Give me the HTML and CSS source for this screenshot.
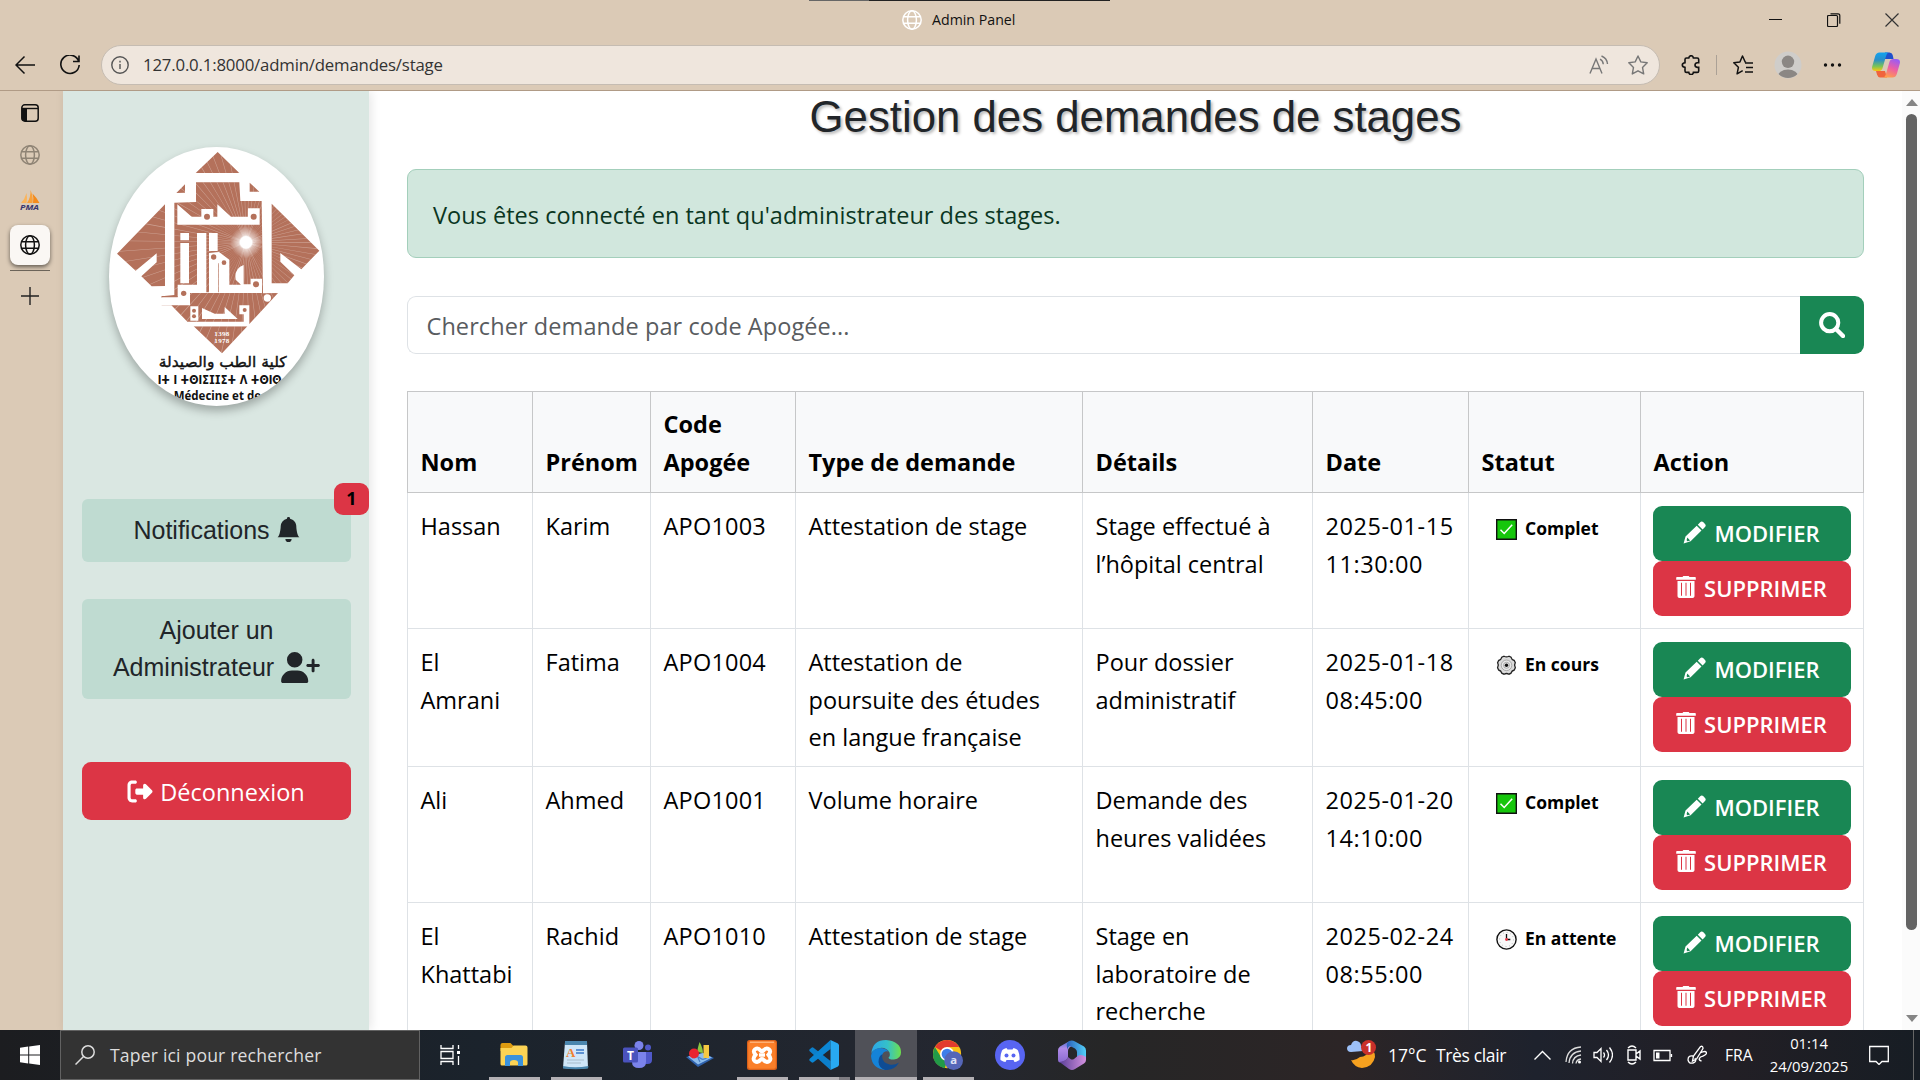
FILE: index.html
```html
<!DOCTYPE html>
<html lang="fr">
<head>
<meta charset="utf-8">
<title>Admin Panel</title>
<link rel="stylesheet" href="styles.css">
</head>
<body>
<svg width="0" height="0" class="defs" aria-hidden="true">
  <defs>
    <symbol id="globe" viewBox="0 0 20 20"><g fill="none" stroke="currentColor" stroke-width="1.5"><circle cx="10" cy="10" r="9.2"/><ellipse cx="10" cy="10" rx="4.4" ry="9.2"/><path d="M1.5 6.7h17M1.5 13.3h17"/></g></symbol>
    <symbol id="pencil" viewBox="0 0 23 23"><path d="M17.2 1.2a2.3 2.3 0 0 1 3.2 0l1.6 1.7a2.3 2.3 0 0 1 0 3.1l-2.4 2.5-4.8-4.8zM13.7 4.8l4.8 4.8L7.6 20.3.6 22.6l1.9-7zM4.300 16.600l-.7 2.700.9.900 2.600-.7z" fill-rule="evenodd" fill="currentColor"/></symbol>
    <symbol id="trash" viewBox="0 0 20 22"><path d="M6.500 1 7.300 0h5.400l.8 1H19a.8.8 0 0 1 .8.8v2H.2v-2A.8.8 0 0 1 1 1zM1.500 5h17v15.200A1.900 1.900 0 0 1 16.600 22H3.400a1.900 1.900 0 0 1-1.900-1.800zm3.500 1.700v13h1v-13zm4.500 0v13h1v-13zm4.500 0v13h1v-13z" fill-rule="evenodd" fill="currentColor"/></symbol>
    <symbol id="done" viewBox="0 0 21 21"><path d="M.7.7h19.600v19.600H.7z" fill="#16c60c" stroke="#111" stroke-width="1.400"/><path d="m4.500 10.800 3.700 3.700 8-8.800" fill="none" stroke="#fff" stroke-width="1.500"/></symbol>
    <symbol id="gear" viewBox="0 0 21 21"><path d="M8 1.200q2.500 1.400 5 0l2 .9q.6 2.700 3.300 3.400l1 2.200q-1.500 2.500 0 5l-1 2.300q-2.700.6-3.300 3.200l-2 1q-2.500-1.400-5 0l-2.200-1q-.6-2.600-3.200-3.200l-1-2.300q1.500-2.500 0-5l1-2.200q2.600-.7 3.200-3.400z" fill="#dcdcdc" stroke="#222" stroke-width="1.300"/><circle cx="10.500" cy="10.300" r="5.300" fill="#e8e8e8" stroke="#999" stroke-width=".8"/><circle cx="10.500" cy="10.300" r="3" fill="none" stroke="#999" stroke-width=".8"/><circle cx="10.500" cy="10.300" r="1.700" fill="#111"/></symbol>
    <symbol id="clock" viewBox="0 0 21 21"><circle cx="10.500" cy="10.500" r="9.600" fill="#f8f8f8" stroke="#111" stroke-width="1.400"/><circle cx="10.500" cy="10.500" r="7" fill="none" stroke="#aaa" stroke-width=".9" stroke-dasharray=".9 2.765"/><path d="M10.500 5v5.500h3.800" fill="none" stroke="#111" stroke-width="1.300"/><circle cx="10.500" cy="10.500" r="1.400" fill="#f03a4a"/></symbol>
  </defs>
</svg>

<header class="browser">
  <div class="titlebar">
    <div class="peek"></div>
    <div class="tab-title"><svg class="i20"><use href="#globe"/></svg><span>Admin Panel</span></div>
    <div class="window-buttons">
      <svg viewBox="0 0 14 14"><path d="M0 6.500h13" stroke="#111"/></svg>
      <svg viewBox="0 0 14 14"><path d="M.5 3.500a1 1 0 0 1 1-1h8a1 1 0 0 1 1 1v9a1 1 0 0 1-1 1h-8a1 1 0 0 1-1-1zM3.500.8H11a1.700 1.700 0 0 1 1.800 1.700v8.200" fill="none" stroke="#111" stroke-width="1.200"/></svg>
      <svg viewBox="0 0 14 14"><path d="m.5.500 13 13m0-13-13 13" stroke="#333" stroke-width="1.200"/></svg>
    </div>
  </div>
  <div class="toolbar">
    <svg class="i20 back" viewBox="0 0 20 20"><path d="M20 10H1M9.500 1.500 1 10l8.500 8.500" fill="none" stroke="#111" stroke-width="1.500"/></svg>
    <svg class="i20 reload" viewBox="0 0 20 20"><path d="M18.700 6.200A9.200 9.200 0 1 0 19.200 10M19 .5v6h-6" fill="none" stroke="#111" stroke-width="1.600"/></svg>
    <div class="address">
      <svg class="info" viewBox="0 0 18 18"><g fill="none" stroke="#555" stroke-width="1.400"><circle cx="9" cy="9" r="8.200"/><path d="M9 8v5M9 4.800v1.600"/></g></svg>
      <span class="url">127.0.0.1:8000/admin/demandes/stage</span>
      <svg class="read" viewBox="0 0 20 20"><g fill="none" stroke="#777" stroke-width="1.400"><path d="M1 18.500 7 4l6 14.500M3.200 13.500h7.700M11 4.200q3 1.500 3.300 5M12.500 1q5.500 2.200 6 8"/></g></svg>
      <svg class="i20" viewBox="0 0 20 20"><path d="m10 1 2.800 5.900 6.400.9-4.700 4.600 1.200 6.500-5.700-3.100-5.700 3.100 1.200-6.500L.8 7.800l6.400-.9z" fill="none" stroke="#777" stroke-width="1.400" stroke-linejoin="round"/></svg>
    </div>
    <div class="tools">
      <svg viewBox="0 0 20 20"><path d="M4 4.500q0-1.500 1.500-1.500h2.300q.3-2.300 2.300-2.300T12.400 3h3.800q1.500 0 1.500 1.500v3.300h-1.400q-2.300.3-2.300 2.300t2.300 2.300h1.400v3.500q0 1.500-1.500 1.500h-3.800q-.3 2.200-2.300 2.200t-2.300-2.200H5.500q-1.500 0-1.500-1.500v-3.500Q1.300 12 1.300 10T4 7.800z" fill="none" stroke="#111" stroke-width="1.600"/></svg>
      <span class="rule"></span>
      <svg viewBox="0 0 20 20"><path d="m13 7.300-.8-.3L9.500 1 6.900 7 .8 7.800l4.600 4.500-1.300 6.500 5.600-3.100M12 8h8M13 12.500h7M12 17h8" fill="none" stroke="#111" stroke-width="1.500" stroke-linejoin="round"/></svg>
      <svg class="avatar" viewBox="0 0 28 28"><defs><clipPath id="av"><circle cx="14" cy="14" r="13"/></clipPath></defs><circle cx="14" cy="14" r="13.500" fill="#cfcdca"/><g clip-path="url(#av)" fill="#8b8784"><circle cx="14" cy="10.800" r="6.200"/><ellipse cx="14" cy="26" rx="10.500" ry="7.500"/></g></svg>
      <svg viewBox="0 0 20 20"><g fill="#111"><circle cx="3.500" cy="10" r="1.700"/><circle cx="10.500" cy="10" r="1.700"/><circle cx="17.500" cy="10" r="1.700"/></g></svg>
      <svg class="copilot" viewBox="0 0 28 26">
        <defs>
          <linearGradient id="cp1" x1="0" y1="0" x2="0" y2="1"><stop offset="0" stop-color="#12a3f0"/><stop offset=".4" stop-color="#2a8fc8"/><stop offset=".75" stop-color="#7cc454"/><stop offset="1" stop-color="#fbc710"/></linearGradient>
          <linearGradient id="cp2" x1=".7" y1="0" x2=".3" y2="1"><stop offset="0" stop-color="#9a5cf4"/><stop offset=".5" stop-color="#ee5fa2"/><stop offset="1" stop-color="#ffa04a"/></linearGradient>
        </defs>
        <path d="M13 .5h4.500q2.500 0 3.200 2.500L21.500 7h-9z" fill="#2050cc"/>
        <path d="M8 25.500q-2 0-3-3L4 19h9l2 6.500z" fill="#f0643c"/>
        <path d="M7.500.5H17q-2 .2-3 3.700l-3.500 12Q9.700 19 6.500 19H3.700Q-.8 19 .2 14.500l3-10.500Q4.300.5 7.500.5z" fill="url(#cp1)"/>
        <path d="M20.500 25.500H11q2-.2 3-3.700l3.500-12Q18.300 7 21.500 7h2.800q4.500 0 3.500 4.500l-3 10.500q-1.100 3.500-4.300 3.500z" fill="url(#cp2)"/>
      </svg>
    </div>
  </div>
</header>

<div class="middle">
  <nav class="tabs">
    <svg class="tab-icon" viewBox="0 0 20 20"><rect x="1.800" y="1.800" width="16.400" height="16.400" rx="3" fill="none" stroke="#111" stroke-width="1.500"/><path d="M2 5.500h16" stroke="#111" stroke-width="1.400"/><path d="M2 5h5v13H4q-2 0-2-2z" fill="#111"/></svg>
    <svg class="tab-icon muted"><use href="#globe"/></svg>
    <svg class="tab-icon pma" viewBox="0 0 24 22"><path d="M3 13Q7 9 8.500 3q1 5 0 10z" fill="#fbb45a"/><path d="M9 13Q13 7 12.500 0q3 7 2 13z" fill="#f9a13a"/><path d="M15 13q1-5-.5-9.500Q19 8 21.500 13z" fill="#f58b1b"/><text x="2" y="19.800" font-size="7.800" textLength="19" lengthAdjust="spacingAndGlyphs" font-weight="bold" font-style="italic" fill="#37366f">PMA</text></svg>
    <span class="tab-active"><svg class="i20"><use href="#globe"/></svg></span>
    <span class="tab-rule"></span>
    <svg class="tab-add" viewBox="0 0 18 18"><path d="M9 0v18M0 9h18" stroke="#222" stroke-width="1.400"/></svg>
  </nav>

  <aside class="sidebar">
    <svg class="logo" viewBox="0 0 645 777">
      <defs>
        <path id="brown" d="M326 15l65 63H260zM228 112v25l-26 1zM422 107l29 27h-29zM261 106h130l3 56h64l4 277 45-1-86 93-6-6H236l-49-50h-29v-27l38-4V167l65-2zM168 172v245l-40 1-31-30 46-42v-27l-63 52-56-51zM488 170l143 141-54 56-63-49v26l42 41-20 24h-48zM254 538h161l-76 81z"/>
        <clipPath id="brownClip"><use href="#brown"/></clipPath>
        <radialGradient id="sun"><stop offset="0" stop-color="#fff"/><stop offset=".36" stop-color="#fff"/><stop offset=".45" stop-color="#fff" stop-opacity=".6"/><stop offset="1" stop-color="#fff" stop-opacity="0"/></radialGradient>
      </defs>
      <use href="#brown" fill="#b4715b"/>
      <g clip-path="url(#brownClip)"><circle cx="411" cy="286" r="200" fill="none" stroke="#fff" stroke-opacity=".34" stroke-width="400" stroke-dasharray="1.600 15.400"/><circle cx="411" cy="286" r="48" fill="url(#sun)"/></g>
      <g fill="#fff">
        <path d="M205 172l43 37h29v-23h36v23h12v-37l41 37h51v-25h35v49H205z"/>
        <path d="M214 258h26v22h-26zM214 288h26v121h-26zM264 258h28v180h-28zM300 258h26v54h-26zM300 346h27v92h-27z"/>
        <path d="M300 318l30-3 31 23v75h35l-16-15q-5-34 24-44v58h21v-17h34v43H243v37H187l-29-25h48v-37h58v23h65v-87h-29zM150 452h56v23h-56z"/>
        <circle cx="475" cy="453" r="11"/>
        <path d="M244 478h24v43h-24zM279 483l38 17h30v-20l39 36H279zM391 475h30v63H236v-14h168v-22h-13z"/>
      </g>
      <path d="M158 447h48v4h-48z" fill="#b4715b"/>
      <g fill="#b4715b"><circle cx="294" cy="209" r="9"/><circle cx="434" cy="209" r="9"/><circle cx="314" cy="330" r="8"/><circle cx="345" cy="347" r="7"/><circle cx="441" cy="412" r="9"/><circle cx="224" cy="439" r="8"/><circle cx="255" cy="491" r="6"/><circle cx="255" cy="508" r="6"/><circle cx="407" cy="489" r="6"/></g>
      <g fill="#fff" class="logo-year"><text x="316" y="566" textLength="45">1398</text><text x="316" y="587" textLength="45">1978</text></g>
      <g fill="#111">
        <text class="logo-ar" x="341" y="660" text-anchor="middle" direction="rtl" textLength="384" lengthAdjust="spacingAndGlyphs">كلية الطب والصيدلة</text>
        <text class="logo-tif" x="146" y="711" textLength="372" lengthAdjust="spacingAndGlyphs">ⵏⵜ ⵏ ⵜⵙⵏⵉⵊⵊⵉⵜ ⴷ ⵜⵙⵏⵙ</text>
        <text class="logo-fr" x="194" y="760" textLength="262" lengthAdjust="spacingAndGlyphs">Médecine et de</text>
      </g>
    </svg>
    <a class="side-link">Notifications <svg class="bell" viewBox="0 0 16 16"><path fill="currentColor" d="M8 16a2 2 0 0 0 2-2H6a2 2 0 0 0 2 2m.995-14.901a1 1 0 1 0-1.990 0A5 5 0 0 0 3 6c0 1.098-.5 6-2 7h14c-1.500-1-2-5.902-2-7 0-2.420-1.720-4.440-4.005-4.901"/></svg><span class="count">1</span></a>
    <a class="side-link add-admin">Ajouter un<br>Administrateur <svg class="user-plus" viewBox="0 0 640 512"><path fill="currentColor" d="M96 128a128 128 0 1 1 256 0A128 128 0 1 1 96 128zM0 482.300C0 383.800 79.800 304 178.300 304h91.400C368.200 304 448 383.800 448 482.300c0 16.400-13.300 29.700-29.700 29.700H29.700C13.300 512 0 498.700 0 482.300zM504 312V248H440c-13.300 0-24-10.700-24-24s10.700-24 24-24h64V136c0-13.300 10.700-24 24-24s24 10.700 24 24v64h64c13.300 0 24 10.700 24 24s-10.700 24-24 24H552v64c0 13.300-10.700 24-24 24s-24-10.700-24-24z"/></svg></a>
    <a class="logout"><svg viewBox="0 0 512 512"><path fill="currentColor" d="M377.900 105.900L500.700 228.700c7.200 7.200 11.300 17.100 11.300 27.300s-4.100 20.100-11.300 27.300L377.900 406.100c-6.400 6.400-15 9.900-24 9.900c-18.700 0-33.900-15.200-33.900-33.900l0-62.100-128 0c-17.700 0-32-14.300-32-32l0-64c0-17.700 14.300-32 32-32l128 0 0-62.100c0-18.700 15.200-33.900 33.900-33.900c9 0 17.600 3.600 24 9.900zM160 96L96 96c-17.700 0-32 14.300-32 32l0 256c0 17.700 14.300 32 32 32l64 0c17.700 0 32 14.300 32 32s-14.300 32-32 32l-64 0c-53 0-96-43-96-96L0 128C0 75 43 32 96 32l64 0c17.700 0 32 14.300 32 32s-14.300 32-32 32z"/></svg><span>Déconnexion</span></a>
  </aside>

  <main>
    <h1>Gestion des demandes de stages</h1>
    <div class="alert">Vous êtes connecté en tant qu'administrateur des stages.</div>
    <div class="search">
      <div class="field">Chercher demande par code Apogée...</div>
      <div class="go"><svg viewBox="0 0 26 26"><circle cx="10.700" cy="10.700" r="8.600" fill="none" stroke="currentColor" stroke-width="4"/><path d="m17 17 7 7" stroke="currentColor" stroke-width="4.400" stroke-linecap="round"/></svg></div>
    </div>
    <table>
      <colgroup><col class="c1"><col class="c2"><col class="c3"><col class="c4"><col class="c5"><col class="c6"><col class="c7"><col class="c8"></colgroup>
      <thead><tr><th>Nom</th><th>Prénom</th><th>Code<br>Apogée</th><th>Type de demande</th><th>Détails</th><th>Date</th><th>Statut</th><th>Action</th></tr></thead>
      <tbody>
        <tr><td>Hassan</td><td>Karim</td><td class="num">APO1003</td><td>Attestation de stage</td><td>Stage effectué à<br>l’hôpital central</td><td class="date">2025-01-15<br>11:30:00</td>
          <td class="cell"><span class="status"><svg><use href="#done"/></svg>Complet</span></td>
          <td class="cell"><a class="btn edit"><svg><use href="#pencil"/></svg>MODIFIER</a><a class="btn del"><svg><use href="#trash"/></svg>SUPPRIMER</a></td></tr>
        <tr><td>El<br>Amrani</td><td>Fatima</td><td class="num">APO1004</td><td>Attestation de<br>poursuite des études<br>en langue française</td><td>Pour dossier<br>administratif</td><td class="date">2025-01-18<br>08:45:00</td>
          <td class="cell"><span class="status"><svg><use href="#gear"/></svg>En cours</span></td>
          <td class="cell"><a class="btn edit"><svg><use href="#pencil"/></svg>MODIFIER</a><a class="btn del"><svg><use href="#trash"/></svg>SUPPRIMER</a></td></tr>
        <tr><td>Ali</td><td>Ahmed</td><td class="num">APO1001</td><td>Volume horaire</td><td>Demande des<br>heures validées</td><td class="date">2025-01-20<br>14:10:00</td>
          <td class="cell"><span class="status"><svg><use href="#done"/></svg>Complet</span></td>
          <td class="cell"><a class="btn edit"><svg><use href="#pencil"/></svg>MODIFIER</a><a class="btn del"><svg><use href="#trash"/></svg>SUPPRIMER</a></td></tr>
        <tr><td>El<br>Khattabi</td><td>Rachid</td><td class="num">APO1010</td><td>Attestation de stage</td><td>Stage en<br>laboratoire de<br>recherche</td><td class="date">2025-02-24<br>08:55:00</td>
          <td class="cell"><span class="status"><svg><use href="#clock"/></svg>En attente</span></td>
          <td class="cell"><a class="btn edit"><svg><use href="#pencil"/></svg>MODIFIER</a><a class="btn del"><svg><use href="#trash"/></svg>SUPPRIMER</a></td></tr>
      </tbody>
    </table>
  </main>
  <div class="scrollbar"><span class="up"></span><span class="thumb"></span><span class="down"></span></div>
</div>

<footer class="taskbar">
  <div class="start"><svg viewBox="0 0 20 20"><path d="M0 2.700 8.200 1.600v7.900H0zM9.200 1.400 20 0v9.500H9.200zM0 10.500h8.200v7.900L0 17.300zM9.200 10.500H20V20L9.200 18.600z" fill="#fff"/></svg></div>
  <div class="find"><svg viewBox="0 0 20 20"><circle cx="13" cy="7" r="6.200" fill="none" stroke="#ddd" stroke-width="1.500"/><path d="M8.500 11.500.5 19.500" stroke="#ddd" stroke-width="1.500"/></svg><span>Taper ici pour rechercher</span></div>
  <div class="taskview"><svg viewBox="0 0 20 20"><path d="M1 0v3.500h12V0M1 20v-3.500h12V20M1 6.500h12v7H1zM18.500 0v4M18.500 11v9" fill="none" stroke="#fff" stroke-width="1.300"/><path d="M17 6h3v3h-3z" fill="#fff"/></svg></div>
  <div class="app open"><svg viewBox="0 0 30 30"><path d="M1.500 5q0-2 2-2h8l3 3-3 5h-10z" fill="#dd9b10"/><path d="M1.500 8h11l2-2.500h12q2 0 2 2V24q0 1.500-1.500 1.500H3Q1.500 25.500 1.500 24z" fill="#fcd354"/><path d="M6 26V17.500Q6 15 8.500 15h13q2.500 0 2.500 2.500V26h-5v-3.500Q19 20 15 20t-4 2.500V26z" fill="#3b92dc"/></svg></div>
  <div class="app open"><svg viewBox="0 0 30 30"><path d="M4 2h22l1 26q-12 2-25 0z" fill="#cfe6f8"/><path d="M4 1h22v4H4zM2 26q12 2.500 25.500 0l-.5 2.500q-12 1.500-25 0z" fill="#4a86ae"/><text x="5" y="17" font-size="13" class="serif" fill="#f08030">A</text><path d="M15 10h8M15 13h8" stroke="#3a78c8" stroke-width="1.500"/><path d="M6 20h17M6 23h14" stroke="#a8bccb"/></svg></div>
  <div class="app"><svg viewBox="0 0 30 30"><circle cx="16" cy="5.500" r="4.500" fill="#7b83eb"/><circle cx="25" cy="7.500" r="3" fill="#5059c9"/><path d="M21 12h8v8q0 4-4.500 4H21z" fill="#5059c9"/><path d="M9 12h14v10q0 6-7 6t-7-6z" fill="#7b83eb"/><rect y="7.500" width="15" height="15" rx="1.500" fill="#4a52bd"/><text x="4" y="19.500" font-size="12" font-weight="bold" fill="#fff">T</text></svg></div>
  <div class="app"><svg viewBox="0 0 30 30"><path d="m1 17 17-4 11 5-16 9z" fill="#2f62ad"/><path d="m3 16.500 15-3.500 9 4.500-14 7z" fill="#8cbcec"/><path d="M7 18q5-3 8 0t8-1M12 15q2 5 3 7" fill="none" stroke="#4a80c4" stroke-width="1.200"/><path d="M12 12q1-5 2.500-10Q18 8 18 13z" fill="#8cc63f"/><path d="M18.500 5h5.500v13h-5.500z" fill="#f5c842"/><circle cx="9" cy="13.500" r="5" fill="#e8252f"/></svg></div>
  <div class="app open"><svg viewBox="0 0 30 30"><rect width="30" height="30" rx="2.500" fill="#d9601a"/><rect x="1.200" y="1.200" width="27.600" height="27.600" rx="2" fill="#fb7f29"/><path d="M3 2.200h24" stroke="#ffc79a"/><path d="M8.500 14.800q-3-3.500-.5-5.500 3-2 5.500 1.200 1.500 1.500 3 0Q19 7.300 22 9.300q2.500 2-.5 5.500 3.500 4.500.5 6.500-3 1.800-5.500-1.500-1.500-1.500-3 0-2.500 3.300-5.500 1.500-3-2 .5-6.500z" fill="none" stroke="#fff" stroke-width="4"/><path d="M12 15h6" stroke="#fff" stroke-width="3.500"/></svg></div>
  <div class="app open multi"><svg viewBox="0 0 30 30"><path d="M21.500 0v30L1 11.500q-1.500-1.500 0-2.500l1.500-1.300q1-.7 2 0L21.500 21z" fill="#0c7fcb"/><path d="M21.500 0v9L4.500 22.300q-1 .7-2 0L1 21q-1.500-1 0-2.500z" fill="#0b86d4"/><path d="M21.500 0 29 3.500 30 5v20l-1 1.500-7.500 3.500z" fill="#28a9f1"/></svg></div>
  <div class="app open current"><svg viewBox="0 0 30 30"><defs><linearGradient id="ed1"><stop offset="0" stop-color="#2ba6ea"/><stop offset=".55" stop-color="#35c1c8"/><stop offset="1" stop-color="#6ee04c"/></linearGradient></defs><path d="M.3 13Q2 0 15 0q15 1.500 15 12.500 0 6-7 7-5 .3-5.500-2 2-1.500 1-5Q15 7 9 8q-6 1-8.700 5z" fill="url(#ed1)"/><path d="M0 16Q1 8.500 9 8q6 0 8.500 3.500-5-1-6.500 4-1 7 6.500 12L15 30Q1 29 0 16z" fill="#1583d8"/><path d="M11.500 14q-2 8 7 10.500 5 1 9.500-2-4.500 8-14 7.500-6-2-6.500-8 0-6 4-8z" fill="#0e4c94"/></svg></div>
  <div class="app open"><svg viewBox="0 0 32 32"><circle cx="15" cy="15" r="15" fill="#fbc116"/><path d="M15 15 2 7.500Q7 0 15 0t13 7.500H15z" fill="#e33b2e"/><path d="M2 7.500 9 19l6 3-2.500 8Q0 27 0 15q0-4 2-7.500z" fill="#229a48"/><circle cx="15" cy="15" r="7.500" fill="#fff"/><circle cx="15" cy="15" r="5.800" fill="#3f7eea"/><circle cx="22" cy="22" r="10" fill="#5566b8"/><text x="18.500" y="26" font-size="12" font-weight="bold" fill="#dfe3f6">a</text></svg></div>
  <div class="app"><svg viewBox="0 0 30 30"><circle cx="15" cy="15" r="15" fill="#5865f2"/><path d="M11.500 8 10 8.500Q7.500 9.500 7 10.500 5 15 5.500 20q3 2 5 2l1-2h7l1 2q2 0 5-2 .5-5-1.500-9.500-.5-1-3-2L18.500 8l-1 1.500h-5z" fill="#fff"/><circle cx="11.500" cy="15.500" r="2" fill="#5865f2"/><circle cx="18.500" cy="15.500" r="2" fill="#5865f2"/></svg></div>
  <div class="app"><svg viewBox="0 0 30 30">
    <defs>
      <linearGradient id="m1" x1="0" y1="0" x2="0" y2="1"><stop offset="0" stop-color="#4a6fd0"/><stop offset=".35" stop-color="#b08be8"/><stop offset="1" stop-color="#8a6ad0"/></linearGradient>
      <linearGradient id="m2"><stop offset="0" stop-color="#2b5fb8"/><stop offset="1" stop-color="#52d0fa"/></linearGradient>
      <linearGradient id="m3"><stop offset="0" stop-color="#5a3f98"/><stop offset="1" stop-color="#d391e0"/></linearGradient>
    </defs>
    <path d="M13 .8 3 6.500Q1 8 1 10v10q0 2 2 2.500 6-1 8-5V11q0-3 3-4.500L17 5z" fill="url(#m1)"/>
    <path d="M12 1.200q3-1.700 6 .3l9 5q2 1.500 2 4V20l-9-3v-5q0-2-2-3.500L13 6q-3 1 -2 4Q8 4 12 1.200z" fill="url(#m2)"/>
    <path d="M2.500 22q7-1 8.500-5l2.500 2q1.500 1 3.500 0l3-2.500q4-3 9 .5v3q0 2-2 3.500L18 29q-3 2-6 0z" fill="url(#m3)"/>
  </svg></div>
  <div class="tray">
    <svg class="weather" viewBox="0 0 32 30"><path d="M14 17q7 0 10-8 5 1 5 8-2 10-13 11-8-1-11-8 4 1 9-3z" fill="#f6a11f"/><path d="M5 12q-4 0-4-4 .5-3 4-3 2-5 6-4 4 1 4 5 3 1 2 5z" fill="#9cc0f8"/><circle cx="22.500" cy="7.500" r="7.500" fill="#c9302a"/><text x="19.500" y="12" font-size="12" font-weight="bold" fill="#fff">1</text></svg>
    <span class="wx">17°C</span><span class="wx sky">Très clair</span>
    <svg viewBox="0 0 20 20"><path d="m1.500 14.500 8-8 8 8" fill="none" stroke="#fff" stroke-width="1.400"/></svg>
    <svg viewBox="0 0 20 20"><g fill="none" stroke="#ddd" stroke-width="1.300"><path d="M1 17Q2 3 16 2M4 18Q5 7 16 6M7.500 18.500Q8 11 16 10M11 18.500q.5-4 5-4.500"/></g><circle cx="14.500" cy="17" r="1.500" fill="#fff"/></svg>
    <svg viewBox="0 0 20 20"><path d="M1 7.500h3l4-4v13l-4-4H1zM10.500 7.500q2 2.500 0 5M13.500 5q4 5 0 10M16.500 2.500q6 7.500 0 15" fill="none" stroke="#fff" stroke-width="1.300"/></svg>
    <svg viewBox="0 0 20 20"><path d="M2 5h8v10H2zM10 9l4-3v8l-4-3M2 3q4-4 8 0M2 17q4 4 8 0" fill="none" stroke="#fff" stroke-width="1.400"/></svg>
    <svg viewBox="0 0 20 20"><path d="M1 5.500h16v10H1zM18.500 9v3" fill="none" stroke="#fff" stroke-width="1.300"/><path d="M3 7.500h3.500v6H3z" fill="#fff"/></svg>
    <svg viewBox="0 0 20 20"><path d="m5.500 16 1-5 7-9.500q2.500-1 2.500 2L9.500 14zM6 11q-5-1-5 4 1 4 5 3t2-5M13 8q6-3 6.500 0 0 2-6 4-3 3 1 4" fill="none" stroke="#fff" stroke-width="1.300"/></svg>
    <span class="lang">FRA</span>
    <span class="clock">01:14<br>24/09/2025</span>
    <svg class="note" viewBox="0 0 20 20"><path d="M.7 1.500h18.600v15H13L10 19.500 7 16.500H.7z" fill="none" stroke="#fff" stroke-width="1.300"/></svg>
    <span class="peek-edge"></span>
  </div>
</footer>
</body>
</html>
```
FILE: styles.css
```css
* { box-sizing: border-box; }
html, body { margin: 0; width: 1920px; height: 1080px; overflow: hidden; }
body {
  display: grid;
  grid-template-rows: 91px 939px 50px;
  font-family: "Open Sans", "Noto Sans", sans-serif;
  font-size: 23.5px;
  line-height: 37.5px;
  color: #212529;
  background: #fff;
}
svg { display: block; flex: none; }
.defs { position: absolute; }
.i20 { width: 20px; height: 20px; }

/* Browser frame */
.browser { background: #dbcab6; border-bottom: 1px solid #b09b86; line-height: 20px; }
.titlebar { display: grid; grid-template: 1px 44px / 1fr auto; align-items: start; }
.peek { grid-column: 1 / 3; width: 301px; height: 1px; margin-left: 809px; background: linear-gradient(90deg, #666 60px, #222 60px); }
.tab-title { display: flex; align-items: center; gap: 10px; margin: 9px 0 0 902px; font-size: 14.2px; color: #111; }
.tab-title svg { color: #fff; }
.window-buttons { display: flex; gap: 44px; padding: 12px 21px 0 0; }
.window-buttons svg { width: 14px; height: 14px; }
.toolbar { display: flex; height: 40px; align-items: center; }
.back { margin-left: 15px; }
.reload { margin-left: 25px; }
.address {
  display: flex; align-items: center;
  width: 1559px; height: 40px; margin-left: 21px; padding: 0 11px 0 9px;
  background: #efe6dd; border: 1px solid #c5bcb2; border-radius: 20px;
}
.info { width: 18px; height: 18px; }
.url { margin-left: 14px; font-size: 16.8px; color: #333; letter-spacing: -0.18px; }
.read { width: 20px; height: 20px; margin-left: auto; margin-right: 19px; }
.tools { display: flex; align-items: center; margin-left: 21px; }
.tools svg { width: 20px; height: 20px; }
.tools .rule { width: 1px; height: 20px; margin: 0 16px 0 15px; background: #aba196; }
.tools .avatar { width: 28px; height: 28px; margin: 0 20px 0 21px; }
.tools .copilot { width: 28px; height: 26px; margin-left: 30px; }

.middle { display: grid; grid-template-columns: 63px 306px 1533px 18px; overflow: hidden; }

.tabs { display: flex; flex-direction: column; align-items: center; background: #dbcab6; padding: 12px 4px 0 0; }
.tab-icon { width: 20px; height: 20px; color: #111; }
.tab-icon.muted { color: #8f8475; margin-top: 22px; }
.tab-icon.pma { width: 24px; height: 22px; margin-top: 25px; }
.tab-active {
  display: flex; align-items: center; justify-content: center;
  width: 40px; height: 40px; margin-top: 13px; border-radius: 8px;
  background: #faf7f4; color: #111; box-shadow: 0 2px 4px rgba(0, 0, 0, .55);
}
.tab-rule { width: 40px; height: 1px; margin-top: 5px; background: #6c6459; }
.tab-add { width: 18px; height: 18px; margin-top: 16px; }

/* Application sidebar */
.sidebar {
  background: #dae7e2; box-shadow: 2px 0 10px rgba(0, 0, 0, .1); z-index: 1;
  padding: 56px 18px 0 19px; font-family: "Liberation Sans", Arial, sans-serif; font-size: 25px;
}
.logo { width: 215px; height: 259px; margin: 0 27px; border-radius: 50%; background: #fff; box-shadow: 0 5px 10px rgba(0, 0, 0, .28); }
.logo-year { font: bold 21px "Liberation Serif", serif; }
.logo-ar { font: 44px "DejaVu Sans", sans-serif; stroke: #111; stroke-width: 1.2px; }
.logo-tif { font: bold 37px "DejaVu Sans", sans-serif; }
.logo-fr { font: bold 38px "Noto Sans", sans-serif; }
.side-link {
  display: block; position: relative; width: 269px; margin-top: 93px; padding: 12.5px 25px;
  border-radius: 6px; background: #bfdbd1; text-align: center; white-space: nowrap;
}
.side-link svg { display: inline-block; }
.bell { width: 25px; height: 25px; vertical-align: -3px; margin: 0 -1px; }
.user-plus { width: 39px; height: 31px; vertical-align: -7px; }
.add-admin { height: 100px; margin-top: 37px; padding-top: 13px; }
.count {
  position: absolute; top: -16px; right: -18px; width: 35px; height: 32px; border-radius: 9px;
  background: #dc3545; color: #000; font: bold 18px/31px "Open Sans", sans-serif;
}
.logout {
  display: flex; align-items: center; justify-content: center; gap: 7px;
  width: 269px; height: 58px; margin-top: 63px; padding: 2px 1px 0 0; border-radius: 9px;
  background: #dc3545; color: #fff; font: 23.500px "Open Sans", sans-serif;
}
.logout svg { width: 26px; height: 25px; }

/* Content */
main { padding: 0 38px; height: 939px; overflow: hidden; }
h1 {
  margin: 0 0 26px; font: 400 43.75px/52px "Liberation Sans", Arial, sans-serif; height: 52px;
  text-align: center; text-shadow: 2px 2px 3px rgba(0, 0, 0, .28);
}
.alert { height: 89px; padding: 25px; line-height: 40px; border: 1px solid #a3cfbb; border-radius: 9px; background: #d1e7dd; color: #0a3622; letter-spacing: .02px; }
.search { display: flex; height: 58px; margin: 38px 0 37px; }
.field { flex: 1; padding: 0 18.500px; line-height: 58px; border: 1px solid #dee2e6; border-right: 0; border-radius: 9px 0 0 9px; color: #595c5f; letter-spacing: .08px; }
.go { display: flex; align-items: center; justify-content: center; width: 64px; border-radius: 0 9px 9px 0; background: #198754; color: #fff; }
.go svg { width: 26px; height: 26px; }

table { width: 1457px; table-layout: fixed; border-collapse: collapse; color: #000; }
.c1 { width: 125px; } .c2 { width: 118px; } .c3 { width: 145px; } .c4 { width: 287px; }
.c5 { width: 230px; } .c6 { width: 156px; } .c7 { width: 172px; } .c8 { width: 223px; }
th, td { padding: 15px 12px 9.500px 12.5px; vertical-align: top; text-align: left; border: 1px solid #dee2e6; white-space: nowrap; }
.cell { padding-top: 13px; padding-left: 12px; padding-bottom: 12px; }
th { height: 101px; padding-top: 14px; padding-bottom: 11px; vertical-align: bottom; background: #f8f9fa; border-color: #c6c7c8; color: #000; font-weight: 700; }
.num { letter-spacing: .2px; }
.date { letter-spacing: .55px; }
.status { display: flex; align-items: center; gap: 8px; height: 44px; margin: 1px 0 0 15px; font-size: 17.5px; font-weight: 700; color: #000; }
.status svg { width: 21px; height: 21px; }
.btn { display: flex; align-items: center; justify-content: center; gap: 8px; width: 198px; height: 55px; border-radius: 9px; color: #fff; font-size: 22px; font-weight: 600; padding: 1px 1px 0 0; }
.btn.edit { background: #198754; }
.btn.del { background: #dc3545; }
.btn svg { width: 23px; height: 23px; margin-top: -4px; }
.btn.del svg { width: 20px; height: 22px; }

.scrollbar { display: flex; flex-direction: column; align-items: center; background: #fbfbfb; padding: 8px 0 8px 1px; }
.up, .down { border: 6.5px solid transparent; height: 7px; }
.up { border-top: 0; border-bottom: 7px solid #858585; }
.down { border-bottom: 0; border-top: 7px solid #858585; margin-top: auto; }
.thumb { width: 11px; height: 816px; margin: 8px 0 0; border-radius: 6px; background: #636363; }

/* Taskbar */
.taskbar { display: flex; background: linear-gradient(90deg, #1c1d20, #1b232c 25%, #242730 50%, #262626 58%, #2c2526 70%, #1e222d 80%, #221f25 90%, #171d24); color: #fff; }
.start { display: flex; align-items: center; justify-content: center; width: 60px; }
.start svg, .find svg, .taskview svg { width: 20px; height: 20px; }
.find { display: flex; align-items: center; gap: 15px; width: 360px; padding: 0 0 0 14px; background: #333; border: 1px solid #626262; color: #ddd; font-size: 17.600px; letter-spacing: .17px; }
.find span { padding-top: 2px; }
.taskview { display: flex; align-items: center; justify-content: center; width: 60px; margin-right: 3px; }
.app { display: flex; flex-direction: column; align-items: center; width: 62px; padding-top: 10px; }
.app svg { width: 30px; height: 30px; }
.app.open::after { content: ""; width: 51px; height: 3px; margin-top: auto; background: #b3b0b4; }
.app.multi::after { background: linear-gradient(90deg, #b3b0b4 40px, #7e7c82 40px); }
.app.current { background: #505158; }
.app.current::after { width: 62px; }
.serif { font-family: "Liberation Serif", serif; font-weight: bold; }
.tray {
  display: grid; align-items: center; margin-left: auto; width: 574px;
  grid-template-columns: 42px 48px 97px 32px 28px 33px 27px 34px 38px 40px 88px 60px 1px;
  white-space: nowrap;
}
.tray svg { width: 20px; height: 20px; }
.tray .weather { width: 32px; height: 30px; }
.wx { font-size: 17.500px; padding-top: 2px; }
.sky { letter-spacing: -.35px; }
.lang { font-size: 15.600px; padding-top: 1px; }
.clock { font-size: 14.800px; line-height: 23px; text-align: center; }
.tray .note { margin-left: 16px; }
.peek-edge { height: 50px; background: #666; }
```
